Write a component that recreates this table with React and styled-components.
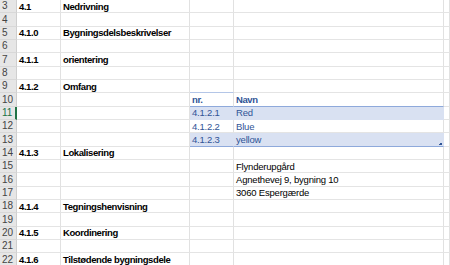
import React from "react";
import styled, { createGlobalStyle } from "styled-components";

const Global = createGlobalStyle`
  html, body {
    margin: 0;
    padding: 0;
    background: #ffffff;
    overflow: hidden;
  }
`;

const Sheet = styled.div`
  display: grid;
  grid-template-columns: 17px 44px 129px 44px 210px 1fr;
  grid-auto-rows: 13.333px;
  width: 450px;
  height: 265px;
  overflow: hidden;
  border-top: 1px solid #e2e2e2;
  margin-top: -1px;
  font-family: "Liberation Sans", Arial, sans-serif;
  font-size: 9.5px;
  color: #000;
  position: relative;
`;

const RowHead = styled.div`
  box-sizing: border-box;
  background: #e6e6e6;
  color: ${(p) => (p.$active ? "#217346" : "#444")};
  border-right: ${(p) => (p.$active ? "2px solid #217346" : "1px solid #cfcfcf")};
  border-bottom: 1px solid #d8d8d8;
  padding-left: 2px;
  font-size: 10px;
  display: flex;
  align-items: flex-end;
  padding-bottom: 1px;
  line-height: 1;
`;

const Cell = styled.div`
  box-sizing: border-box;
  border-right: 1px solid #e1e1e1;
  border-bottom: 1px solid #e4e4e4;
  padding: 0 2px;
  display: flex;
  align-items: flex-end;
  padding-bottom: 1px;
  white-space: nowrap;
  overflow: visible;
  line-height: 1;
  font-weight: ${(p) => (p.$bold ? 700 : 400)};
  letter-spacing: ${(p) => (p.$bold ? "-0.4px" : "-0.2px")};
  position: relative;
  z-index: ${(p) => (p.$spill ? 1 : 0)};
`;

const TableCell = styled(Cell)`
  color: #305496;
  background: ${(p) => (p.$band ? "#d9e1f2" : "#ffffff")};
  border-right-color: ${(p) => (p.$band ? "#d9e1f2" : "#e1e1e1")};
  border-bottom: ${(p) =>
    p.$head || p.$last ? "1px solid #8ea9db" : p.$band ? "1px solid #d9e1f2" : "1px solid #e4e4e4"};
  border-top: ${(p) => (p.$head ? "1px solid #b4c6e7" : "none")};
  margin-top: ${(p) => (p.$head ? "-1px" : "0")};
`;

const Handle = styled.div`
  position: absolute;
  right: 1px;
  bottom: 1px;
  width: 3px;
  height: 3px;
  background: linear-gradient(135deg, transparent 50%, #2f5597 50%);
`;

const rows = [
  { n: 3, a: "4.1", b: "Nedrivning" },
  { n: 4 },
  { n: 5, a: "4.1.0", b: "Bygningsdelsbeskrivelser" },
  { n: 6 },
  { n: 7, a: "4.1.1", b: "orientering" },
  { n: 8 },
  { n: 9, a: "4.1.2", b: "Omfang" },
  { n: 10, t: ["nr.", "Navn"], head: true },
  { n: 11, t: ["4.1.2.1", "Red"], band: true, active: true },
  { n: 12, t: ["4.1.2.2", "Blue"] },
  { n: 13, t: ["4.1.2.3", "yellow"], band: true, last: true },
  { n: 14, a: "4.1.3", b: "Lokalisering" },
  { n: 15, d: "Flynderupgård" },
  { n: 16, d: "Agnethevej 9, bygning 10" },
  { n: 17, d: "3060 Espergærde" },
  { n: 18, a: "4.1.4", b: "Tegningshenvisning" },
  { n: 19 },
  { n: 20, a: "4.1.5", b: "Koordinering" },
  { n: 21 },
  { n: 22, a: "4.1.6", b: "Tilstødende bygningsdele" },
];

export default function App() {
  return (
    <>
      <Global />
      <Sheet>
        {rows.map((r) => (
          <React.Fragment key={r.n}>
            <RowHead $active={r.active}>{r.n}</RowHead>
            <Cell $bold>{r.a}</Cell>
            <Cell $bold $spill>{r.b}</Cell>
            {r.t ? (
              <>
                <TableCell $head={r.head} $band={r.band} $last={r.last} $bold={r.head}>
                  {r.t[0]}
                </TableCell>
                <TableCell $head={r.head} $band={r.band} $last={r.last} $bold={r.head}>
                  {r.t[1]}
                  {r.last && <Handle />}
                </TableCell>
              </>
            ) : (
              <>
                <Cell />
                <Cell $spill>{r.d}</Cell>
              </>
            )}
            <Cell />
          </React.Fragment>
        ))}
      </Sheet>
    </>
  );
}
